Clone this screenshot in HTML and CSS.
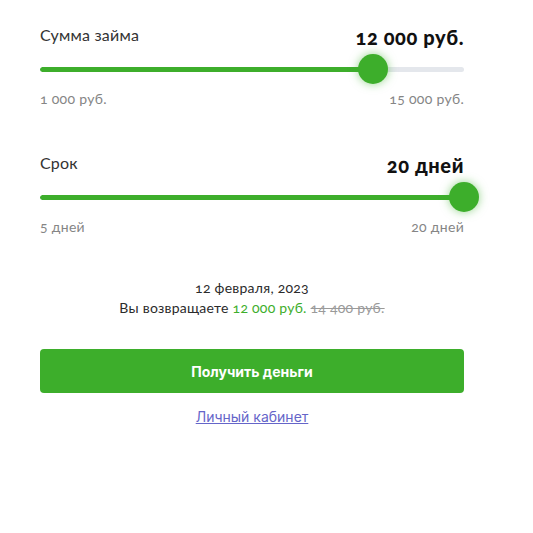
FILE: index.html
```html
<!DOCTYPE html>
<html lang="ru">
<head>
<meta charset="utf-8">
<link rel="stylesheet" href="styles.css">
</head>
<body>
<div class="wrap">
  <div class="block">
    <div class="head">
      <span class="label">Сумма займа</span>
      <span class="value">12 000 руб.</span>
    </div>
    <div class="slider">
      <div class="track">
        <div class="fill" style="width: 78.57%"></div>
      </div>
      <div class="thumb" style="left: 78.57%"></div>
    </div>
    <div class="range">
      <span>1 000 руб.</span>
      <span>15 000 руб.</span>
    </div>
  </div>
  <div class="block block-second">
    <div class="head">
      <span class="label">Срок</span>
      <span class="value">20 дней</span>
    </div>
    <div class="slider">
      <div class="track">
        <div class="fill" style="width: 100%"></div>
      </div>
      <div class="thumb" style="left: 100%"></div>
    </div>
    <div class="range">
      <span>5 дней</span>
      <span>20 дней</span>
    </div>
  </div>
  <div class="summary">
    <div class="date">12 февраля, 2023</div>
    <div class="ret">Вы возвращаете <span class="green">12 000 руб.</span> <s class="old">14 400 руб.</s></div>
  </div>
  <button class="btn">Получить деньги</button>
  <div class="link-row"><a href="#" class="link">Личный кабинет</a></div>
</div>
</body>
</html>
```
FILE: styles.css
```css
html, body {
  margin: 0;
  padding: 0;
  background: #fff;
}
body {
  font-family: Lato, "Open Sans", sans-serif;
  font-variant-numeric: oldstyle-nums;
  color: #2b2b2b;
}
.wrap {
  width: 424px;
  padding: 24px 0 0 40px;
}
.head {
  display: flex;
  justify-content: space-between;
  align-items: center;
  height: 24px;
}
.label {
  font-size: 16px;
  line-height: 20px;
  letter-spacing: 0.2px;
  color: #333;
  margin-top: -3px;
}
.value {
  font-size: 20px;
  line-height: 24px;
  font-weight: 900;
  letter-spacing: 0.6px;
  color: #111;
  margin-top: 1px;
}
.slider {
  position: relative;
  height: 30px;
  margin-top: 6px;
  display: flex;
  align-items: center;
}
.track {
  width: 100%;
  height: 5px;
  border-radius: 3px;
  background: #e4e7ec;
  overflow: hidden;
}
.fill {
  height: 100%;
  background: #3dae2b;
  border-radius: 3px;
}
.thumb {
  position: absolute;
  top: 0;
  width: 30px;
  height: 30px;
  margin-left: -15px;
  border-radius: 50%;
  background: #3dae2b;
  box-shadow: 0 0 10px rgba(61, 174, 43, 0.55);
}
.range {
  display: flex;
  justify-content: space-between;
  margin-top: 7px;
  font-size: 14px;
  letter-spacing: 0.3px;
  line-height: 16px;
  color: #858585;
}
.block-second {
  margin-top: 45px;
}
.summary {
  margin-top: 43px;
  text-align: center;
  font-size: 14px;
  letter-spacing: 0.25px;
  line-height: 20px;
  color: #2b2b2b;
}
.green {
  color: #3dae2b;
}
.old {
  color: #9a9a9a;
}
.btn {
  display: block;
  width: 100%;
  height: 44px;
  margin-top: 31px;
  border: none;
  border-radius: 4px;
  background: #3dae2b;
  color: #fff;
  font-family: Inter, Roboto, sans-serif;
  font-weight: 700;
  font-size: 14px;
  cursor: pointer;
}
.link-row {
  margin-top: 13px;
  text-align: center;
  line-height: 20px;
}
.link {
  font-family: Inter, Roboto, sans-serif;
  font-size: 14px;
  color: #6565c9;
  text-decoration: underline;
}
```
